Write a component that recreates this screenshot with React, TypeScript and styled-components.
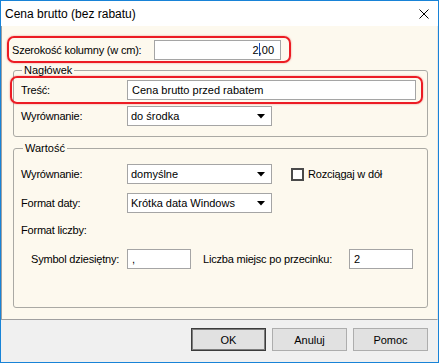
import React from "react";
import styled, { createGlobalStyle } from "styled-components";

const Global = createGlobalStyle`
  html, body { margin: 0; padding: 0; background: #ffffff; }
  body { font-family: "Liberation Sans", Arial, sans-serif; color: #000; }
`;

const Window = styled.div`
  width: 439px;
  height: 363px;
  box-sizing: border-box;
  border: 1px solid #1883d7;
  display: flex;
  flex-direction: column;
  background: #f0f0f0;
  overflow: hidden;
`;

const TitleBar = styled.div`
  height: 25px;
  flex: none;
  background: #ffffff;
  display: flex;
  align-items: center;
  justify-content: space-between;
  padding: 0 9px 0 4px;
  font-size: 12px;
  color: #000;
`;

const Panel = styled.div`
  height: 294px;
  flex: none;
  box-sizing: border-box;
  background: #fdf9ee;
  border-left: 1px solid #a0a0a0;
  border-bottom: 1px solid #a0a0a0;
  border-right: 1px solid #e8e8e8;
  padding-top: 10px;
  display: flex;
  flex-direction: column;
  align-items: flex-start;
`;

const Highlight = styled.div<{ $w: number; $h: number; $ml: number; $pl: number; $mt?: number }>`
  display: flex;
  align-items: center;
  box-sizing: border-box;
  width: ${(p) => p.$w}px;
  height: ${(p) => p.$h}px;
  margin: ${(p) => p.$mt ?? 0}px 0 0 ${(p) => p.$ml}px;
  padding-left: ${(p) => p.$pl}px;
  border: 2px solid #ec1c24;
  border-radius: 7px;
  box-shadow: 0 0 2px rgba(220, 0, 0, 0.45);
`;

const Row = styled.div<{ $mt: number; $pl: number }>`
  display: flex;
  align-items: center;
  height: 20px;
  margin-top: ${(p) => p.$mt}px;
  padding-left: ${(p) => p.$pl}px;
`;

const Label = styled.span<{ $w?: number }>`
  flex: none;
  width: ${(p) => (p.$w ? `${p.$w}px` : "auto")};
  font-size: 11px;
  letter-spacing: -0.2px;
  white-space: nowrap;
  color: #000;
`;

const Group = styled.fieldset<{ $mt: number; $pb: number }>`
  margin: ${(p) => p.$mt}px 0 0 11px;
  width: 415px;
  min-width: 0;
  box-sizing: border-box;
  border: 1px solid #aaa9a4;
  border-radius: 3px;
  padding: 0 0 ${(p) => p.$pb}px 0;
`;

const Legend = styled.legend<{ $ml: number }>`
  margin-left: ${(p) => p.$ml}px;
  padding: 0 2px;
  font-size: 11px;
  line-height: 12px;
  color: #000;
`;

const TextBox = styled.div<{ $w: number; $right?: boolean }>`
  flex: none;
  width: ${(p) => p.$w}px;
  height: 20px;
  box-sizing: border-box;
  border: 1px solid #a5a5a5;
  background: #ffffff;
  display: flex;
  align-items: center;
  justify-content: ${(p) => (p.$right ? "flex-end" : "flex-start")};
  padding: 0 6px 0 4px;
  font-size: 11px;
  color: #000;
  white-space: nowrap;
`;

const Caret = styled.span`
  display: inline-block;
  width: 1px;
  height: 13px;
  background: #1a4fc0;
  margin: 0 -1px 0 0;
  vertical-align: middle;
`;

const Select = styled.div<{ $w: number }>`
  flex: none;
  width: ${(p) => p.$w}px;
  height: 20px;
  box-sizing: border-box;
  border: 1px solid #a5a5a5;
  background: #ffffff;
  display: flex;
  align-items: center;
  justify-content: space-between;
  padding: 0 6px 0 3px;
  font-size: 11px;
  color: #000;
  white-space: nowrap;
`;

const CheckWrap = styled.label`
  display: flex;
  align-items: center;
  margin-left: 19px;
  gap: 4px;
  font-size: 11px;
  letter-spacing: -0.2px;
  color: #000;
`;

const CheckBox = styled.span`
  width: 13px;
  height: 13px;
  box-sizing: border-box;
  border: 2px solid #4a4a4a;
  background: #ffffff;
`;

const Footer = styled.div`
  flex: 1;
  display: flex;
  justify-content: flex-end;
  align-items: flex-start;
  gap: 6px;
  padding: 8px 10px 0 0;
`;

const Button = styled.button<{ $primary?: boolean }>`
  width: 75px;
  height: 23px;
  box-sizing: border-box;
  font-family: "Liberation Sans", Arial, sans-serif;
  font-size: 11px;
  color: #000;
  background: #e1e1e1;
  border: 1px solid ${(p) => (p.$primary ? "#3c3c3c" : "#adadad")};
  box-shadow: ${(p) => (p.$primary ? "inset 0 0 0 1px #7d7d7d" : "none")};
  padding: 0;
  margin: 0;
`;

const Arrow = () => (
  <svg width="8" height="5" viewBox="0 0 8 5">
    <polygon points="0,0 8,0 4,4.5" fill="#000" />
  </svg>
);

const CloseIcon = () => (
  <svg width="10" height="10" viewBox="0 0 10 10">
    <path d="M0.5 0.5 L9.5 9.5 M9.5 0.5 L0.5 9.5" stroke="#000" strokeWidth="1" fill="none" />
  </svg>
);

export default function App() {
  return (
    <>
      <Global />
      <Window>
        <TitleBar>
          <span>Cena brutto (bez rabatu)</span>
          <CloseIcon />
        </TitleBar>
        <Panel>
          <Highlight $w={284} $h={27} $ml={5} $pl={3}>
            <Label $w={142}>Szerokość kolumny (w cm):</Label>
            <TextBox $w={127} $right>
              2<Caret />,00
            </TextBox>
          </Highlight>

          <Group $mt={1} $pb={10}>
            <Legend $ml={8}>Nagłówek</Legend>
            <Highlight $w={413} $h={28} $ml={-4} $pl={9}>
              <Label $w={106}>Treść:</Label>
              <TextBox $w={289}>Cena brutto przed rabatem</TextBox>
            </Highlight>
            <Row $mt={2} $pl={7}>
              <Label $w={106}>Wyrównanie:</Label>
              <Select $w={145}>
                <span>do środka</span>
                <Arrow />
              </Select>
            </Row>
          </Group>

          <Group $mt={5} $pb={38}>
            <Legend $ml={9}>Wartość</Legend>
            <Row $mt={10} $pl={7}>
              <Label $w={106}>Wyrównanie:</Label>
              <Select $w={145}>
                <span>domyślne</span>
                <Arrow />
              </Select>
              <CheckWrap>
                <CheckBox />
                Rozciągaj w dół
              </CheckWrap>
            </Row>
            <Row $mt={9} $pl={7}>
              <Label $w={106}>Format daty:</Label>
              <Select $w={145}>
                <span>Krótka data Windows</span>
                <Arrow />
              </Select>
            </Row>
            <Row $mt={7} $pl={7}>
              <Label>Format liczby:</Label>
            </Row>
            <Row $mt={9} $pl={17}>
              <Label $w={96}>Symbol dziesiętny:</Label>
              <TextBox $w={64}>,</TextBox>
              <Label $w={146} style={{ marginLeft: 12 }}>Liczba miejsc po przecinku:</Label>
              <TextBox $w={64}>2</TextBox>
            </Row>
          </Group>
        </Panel>
        <Footer>
          <Button $primary>OK</Button>
          <Button>Anuluj</Button>
          <Button>Pomoc</Button>
        </Footer>
      </Window>
    </>
  );
}
